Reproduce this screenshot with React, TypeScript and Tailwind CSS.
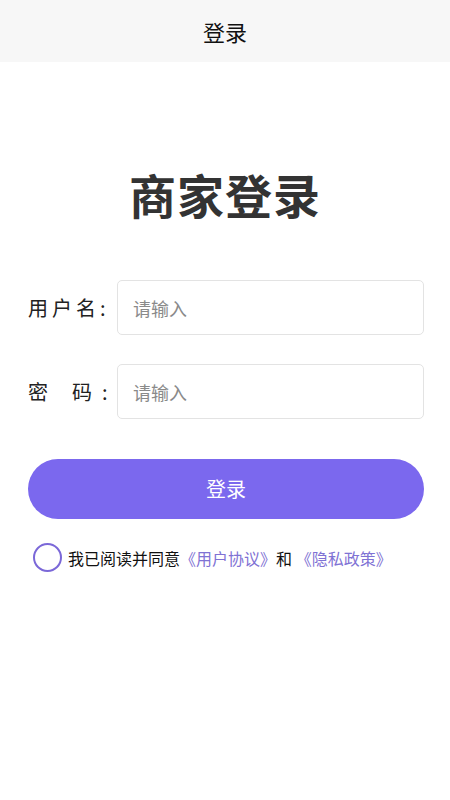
import React, { useState } from "react";

const font = "font-['Noto_Sans_CJK_SC','Noto_Sans',sans-serif]";

const App = () => {
  const [agreed, setAgreed] = useState(false);

  return (
    <div className={`min-h-[800px] w-[450px] bg-white ${font}`}>
      {/* Header */}
      <header className="h-[62px] bg-[#f7f7f7] flex items-center justify-center">
        <h1 className="text-[22px] text-[#111] leading-none">登录</h1>
      </header>

      {/* Title */}
      <div className="pt-[108px] flex justify-center">
        <h2 className="text-[47px] font-bold text-[#333] leading-none tracking-[1px]">
          商家登录
        </h2>
      </div>

      {/* Form */}
      <div className="mt-[63px] pl-[28px] pr-[26px]">
        <div className="flex items-center">
          <label className="w-[89px] text-[20px] text-[#222] tracking-[4px] whitespace-nowrap">
            用户名:
          </label>
          <input
            className="flex-1 h-[55px] border border-[#e3e3e3] rounded-[5px] px-[15px] text-[18px] text-[#333] placeholder:text-[#8a8a8a] outline-none"
            placeholder="请输入"
          />
        </div>
        <div className="flex items-center mt-[29px]">
          <label className="w-[89px] flex text-[20px] text-[#222] whitespace-nowrap">
            <span>密</span>
            <span className="ml-[24px]">码</span>
            <span className="ml-[10px]">:</span>
          </label>
          <input
            type="password"
            className="flex-1 h-[55px] border border-[#e3e3e3] rounded-[5px] px-[15px] text-[18px] text-[#333] placeholder:text-[#8a8a8a] outline-none"
            placeholder="请输入"
          />
        </div>

        <button className="mt-[40px] w-full h-[60px] rounded-full bg-[#7b68ee] text-white text-[20px]">
          登录
        </button>

        {/* Agreement */}
        <div className="mt-[24px] flex items-center pl-[5px]">
          <button
            onClick={() => setAgreed(!agreed)}
            className={`w-[29px] h-[29px] rounded-full border-[2.5px] border-[#7b68d8] ${agreed ? "bg-[#7b68d8]" : ""}`}
          />
          <p className="ml-[6px] text-[16px] text-[#111] whitespace-nowrap">
            我已阅读并同意
            <span className="text-[#7f72d4]">《用户协议》</span>和{" "}
            <span className="text-[#7f72d4]">《隐私政策》</span>
          </p>
        </div>
      </div>
    </div>
  );
};

export default App;
